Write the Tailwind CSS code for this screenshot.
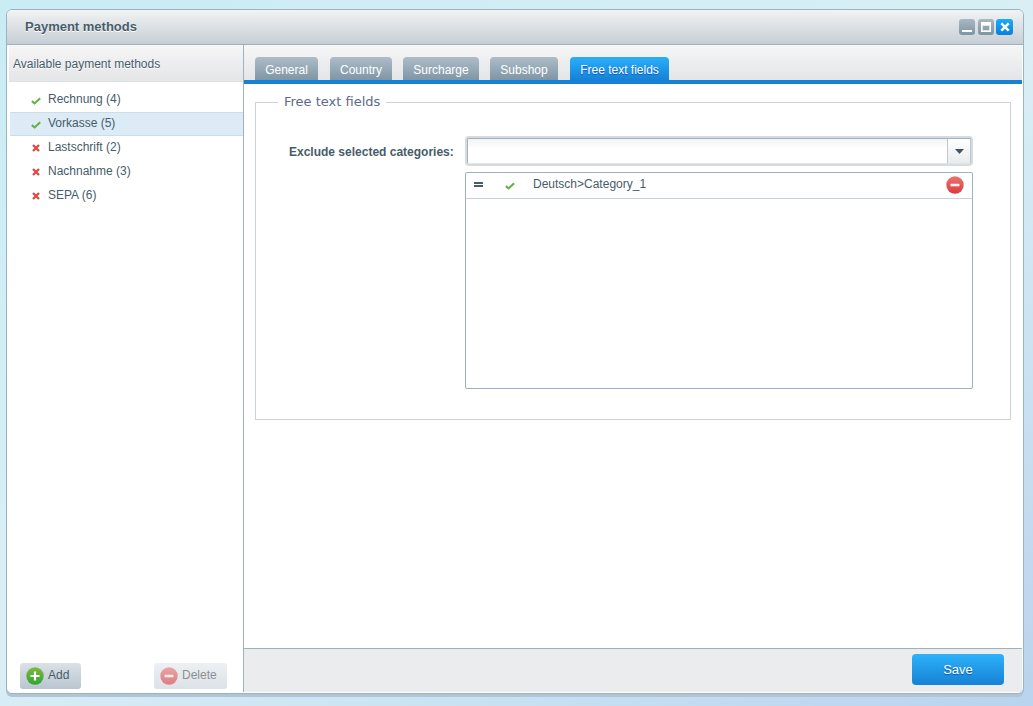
<!DOCTYPE html>
<html lang="en">
<head>
<meta charset="utf-8">
<title>Payment methods</title>
<script src="https://cdn.jsdelivr.net/npm/@tailwindcss/browser@4"></script>
</head>
<body class="h-screen overflow-hidden bg-linear-150 from-[#c9ecf5] via-[#daeff5] to-[#bad3ee] pt-[9px] pr-[9px] pb-3 pl-[6px] font-['Liberation_Sans',Arial,sans-serif] text-xs text-[#475c6a]">
<svg class="absolute size-0" aria-hidden="true">
  <defs>
    <linearGradient id="red" x1="0" y1="0" x2="0" y2="1"><stop offset="0" stop-color="#ec7373"/><stop offset="1" stop-color="#d93c3c"/></linearGradient>
    <linearGradient id="green" x1="0" y1="0" x2="0" y2="1"><stop offset="0" stop-color="#82b93c"/><stop offset="1" stop-color="#2fa336"/></linearGradient>
  </defs>
  <symbol id="tick" viewBox="0 0 10 8"><path d="M.8 4.200 3.600 6.400 9.200 1.200" fill="none" stroke="#62b34a" stroke-width="2.1"/></symbol>
  <symbol id="cross" viewBox="0 0 8 8"><path d="M1 1 7 7M7 1 1 7" fill="none" stroke="#dc4a4a" stroke-width="2.4"/></symbol>
  <symbol id="minus" viewBox="0 0 18 18"><circle cx="9" cy="9" r="8.7" fill="url(#red)"/><rect x="4.500" y="7.700" width="9" height="2.600" rx=".6" fill="#fff" stroke="#e88" stroke-width=".6"/></symbol>
  <symbol id="plus" viewBox="0 0 18 18"><circle cx="9" cy="9" r="8.7" fill="url(#green)"/><path d="M9 4.500v9M4.500 9h9" stroke="#fff" stroke-width="2.2"/></symbol>
</svg>
<main class="flex h-full flex-col overflow-hidden rounded-md border border-[#9db2c0] bg-white shadow-[0_3px_0_#afc6d8]">
  <header class="flex h-[35px] shrink-0 items-center justify-between border-b border-[#9db2c0] bg-linear-to-b from-[#f2f3f3] to-[#c6ced5] pr-[10px] pl-[18px]">
    <h1 class="text-[13px] leading-4 font-bold [text-shadow:0_1px_0_#fff]">Payment methods</h1>
    <div class="flex gap-[2px]">
      <button aria-label="Minimize" class="mr-px flex size-4 items-end justify-center rounded-[3px] bg-linear-to-b from-[#a9b8c3] to-[#7e94a3] pb-[3px]"><span class="h-[2px] w-[10px] bg-white"></span></button>
      <button aria-label="Maximize" class="flex size-4 items-center justify-center rounded-[3px] bg-linear-to-b from-[#a9b8c3] to-[#7e94a3]"><span class="h-[10px] w-[10px] border border-t-3 border-white"><span class="block h-full border border-[#dfe5e9]"></span></span></button>
      <button aria-label="Close" class="flex h-4 w-[17px] items-center justify-center rounded-[3px] bg-linear-to-b from-[#1cabfb] to-[#0a80dc]"><svg class="size-[10px]" viewBox="0 0 10 10"><path d="M1.300 1.300 8.700 8.700M8.700 1.300 1.300 8.700" stroke="#fff" stroke-width="2.4"/></svg></button>
    </div>
  </header>
  <div class="flex min-h-0 flex-1 pb-px">
    <aside class="flex w-[237px] shrink-0 flex-col border-r border-[#9db2c0] pl-[2px]">
      <h2 class="h-[37px] shrink-0 border-b border-[#e0e3e6] bg-linear-to-b from-[#f6f6f7] to-[#e4e5e7] pt-[11px] pl-1 leading-4 [text-shadow:0_1px_0_#fff]">Available payment methods</h2>
      <ul class="ml-px flex-1 pt-[6px] leading-5">
        <li class="flex h-6 items-center border-y border-transparent pb-[2px] pl-[21px]"><svg class="mt-[3px] mr-[7px] h-2 w-[10px]"><use href="#tick"/></svg>Rechnung (4)</li>
        <li class="flex h-6 items-center border-y border-[#cbdde8] bg-[#dcebf6] pb-[2px] pl-[21px]"><svg class="mt-[3px] mr-[7px] h-2 w-[10px]"><use href="#tick"/></svg>Vorkasse (5)</li>
        <li class="flex h-6 items-center border-y border-transparent pb-[2px] pl-[22px]"><svg class="mt-[2px] mr-2 size-2"><use href="#cross"/></svg>Lastschrift (2)</li>
        <li class="flex h-6 items-center border-y border-transparent pb-[2px] pl-[22px]"><svg class="mt-[2px] mr-2 size-2"><use href="#cross"/></svg>Nachnahme (3)</li>
        <li class="flex h-6 items-center border-y border-transparent pb-[2px] pl-[22px]"><svg class="mt-[2px] mr-2 size-2"><use href="#cross"/></svg>SEPA (6)</li>
      </ul>
      <div class="flex justify-between pr-4 pb-[3px] pl-[11px] leading-4">
        <button class="flex h-[26px] w-[61px] items-center gap-1 rounded-[3px] bg-linear-to-b from-[#dbe1e6] to-[#b9c5cf] pl-[6px]"><svg class="size-[18px]"><use href="#plus"/></svg><span class="pb-[2px]">Add</span></button>
        <button disabled class="flex h-[26px] w-[73px] items-center gap-1 rounded-[3px] bg-linear-to-b from-[#edf0f3] to-[#dce2e7] pl-[6px] text-[#8a8f94]"><svg class="size-[18px] opacity-60"><use href="#minus"/></svg><span class="pb-[2px]">Delete</span></button>
      </div>
    </aside>
    <section class="mr-px flex min-w-0 flex-1 flex-col">
      <nav class="flex h-[39px] shrink-0 items-end border-b-4 border-[#1781d6] bg-linear-to-b from-[#f6f6f7] to-[#e4e5e7] pl-[11px] text-white [text-shadow:0_1px_1px_#5d7180]">
        <button class="mr-3 h-[23px] w-[63px] rounded-t bg-linear-to-b from-[#adbdc8] to-[#7f96a5] pt-[2px]">General</button>
        <button class="mr-[11px] h-[23px] w-[62px] rounded-t bg-linear-to-b from-[#adbdc8] to-[#7f96a5] pt-[2px]">Country</button>
        <button class="mr-[11px] h-[23px] w-[76px] rounded-t bg-linear-to-b from-[#adbdc8] to-[#7f96a5] pt-[2px]">Surcharge</button>
        <button class="mr-3 h-[23px] w-[68px] rounded-t bg-linear-to-b from-[#adbdc8] to-[#7f96a5] pt-[2px]">Subshop</button>
        <button class="h-[23px] w-[99px] rounded-t bg-linear-to-b from-[#29b0fa] to-[#1781d6] pt-[2px] [text-shadow:0_1px_1px_#0a55c0]">Free text fields</button>
      </nav>
      <div class="min-h-0 flex-1 px-[11px] pt-[10px]">
        <fieldset class="border border-[#cdd4d9] px-[33px] pb-[30px]">
          <legend class="-ml-[11px] h-4 px-[6px] font-['DejaVu_Sans',Verdana,sans-serif] text-[13px] leading-4 text-[#5e6b86]">Free text fields</legend>
          <div class="flex pt-[26px]">
            <label for="cat" class="w-44 shrink-0 pt-2 leading-4 font-bold">Exclude selected categories:</label>
            <div class="mr-1 min-w-0 flex-1">
              <div class="flex h-[30px] rounded-[4px] border-2 border-[#d4dbe1]">
                <input id="cat" type="text" class="min-w-0 flex-1 rounded-l-[2px] border border-r-0 border-[#a2b1bc] border-b-[#dfe5e9] bg-linear-to-b from-[#f1f3f3] to-white to-40% px-2 outline-none">
                <button aria-label="Show categories" class="flex w-6 items-center justify-center border border-[#bcc8d0] border-t-[#a2b1bc] border-b-[#dfe5e9] bg-linear-to-b from-white to-[#e9ebed] pt-px"><svg class="h-[5px] w-[9px]" viewBox="0 0 9 5"><path d="M0 0h9L4.500 5z" fill="#415460"/></svg></button>
              </div>
              <ul class="mt-[6px] h-[217px] rounded-[2px] border border-[#9db2c0]">
                <li class="flex h-[26px] items-center border-b border-[#c5d0d8] pr-2 pb-[2px] pl-2">
                  <span class="mr-[22px] h-[5px] w-[9px] border-y-2 border-[#475c6a]"></span>
                  <svg class="mt-[3px] mr-[18px] h-2 w-[10px]"><use href="#tick"/></svg>
                  <span class="flex-1 pb-[2px] leading-4">Deutsch&gt;Category_1</span>
                  <button aria-label="Remove category"><svg class="size-[18px]"><use href="#minus"/></svg></button>
                </li>
              </ul>
            </div>
          </div>
        </fieldset>
      </div>
      <footer class="flex h-[44px] shrink-0 justify-end border-t border-[#9db2c0] bg-[#ebecee] pt-[5px] pr-[18px]">
        <button class="h-[31px] w-[92px] rounded bg-linear-to-b from-[#2db2fa] to-[#1781d6] text-[13px] text-white [text-shadow:0_1px_1px_#0b57a0]">Save</button>
      </footer>
    </section>
  </div>
</main>
</body>
</html>
